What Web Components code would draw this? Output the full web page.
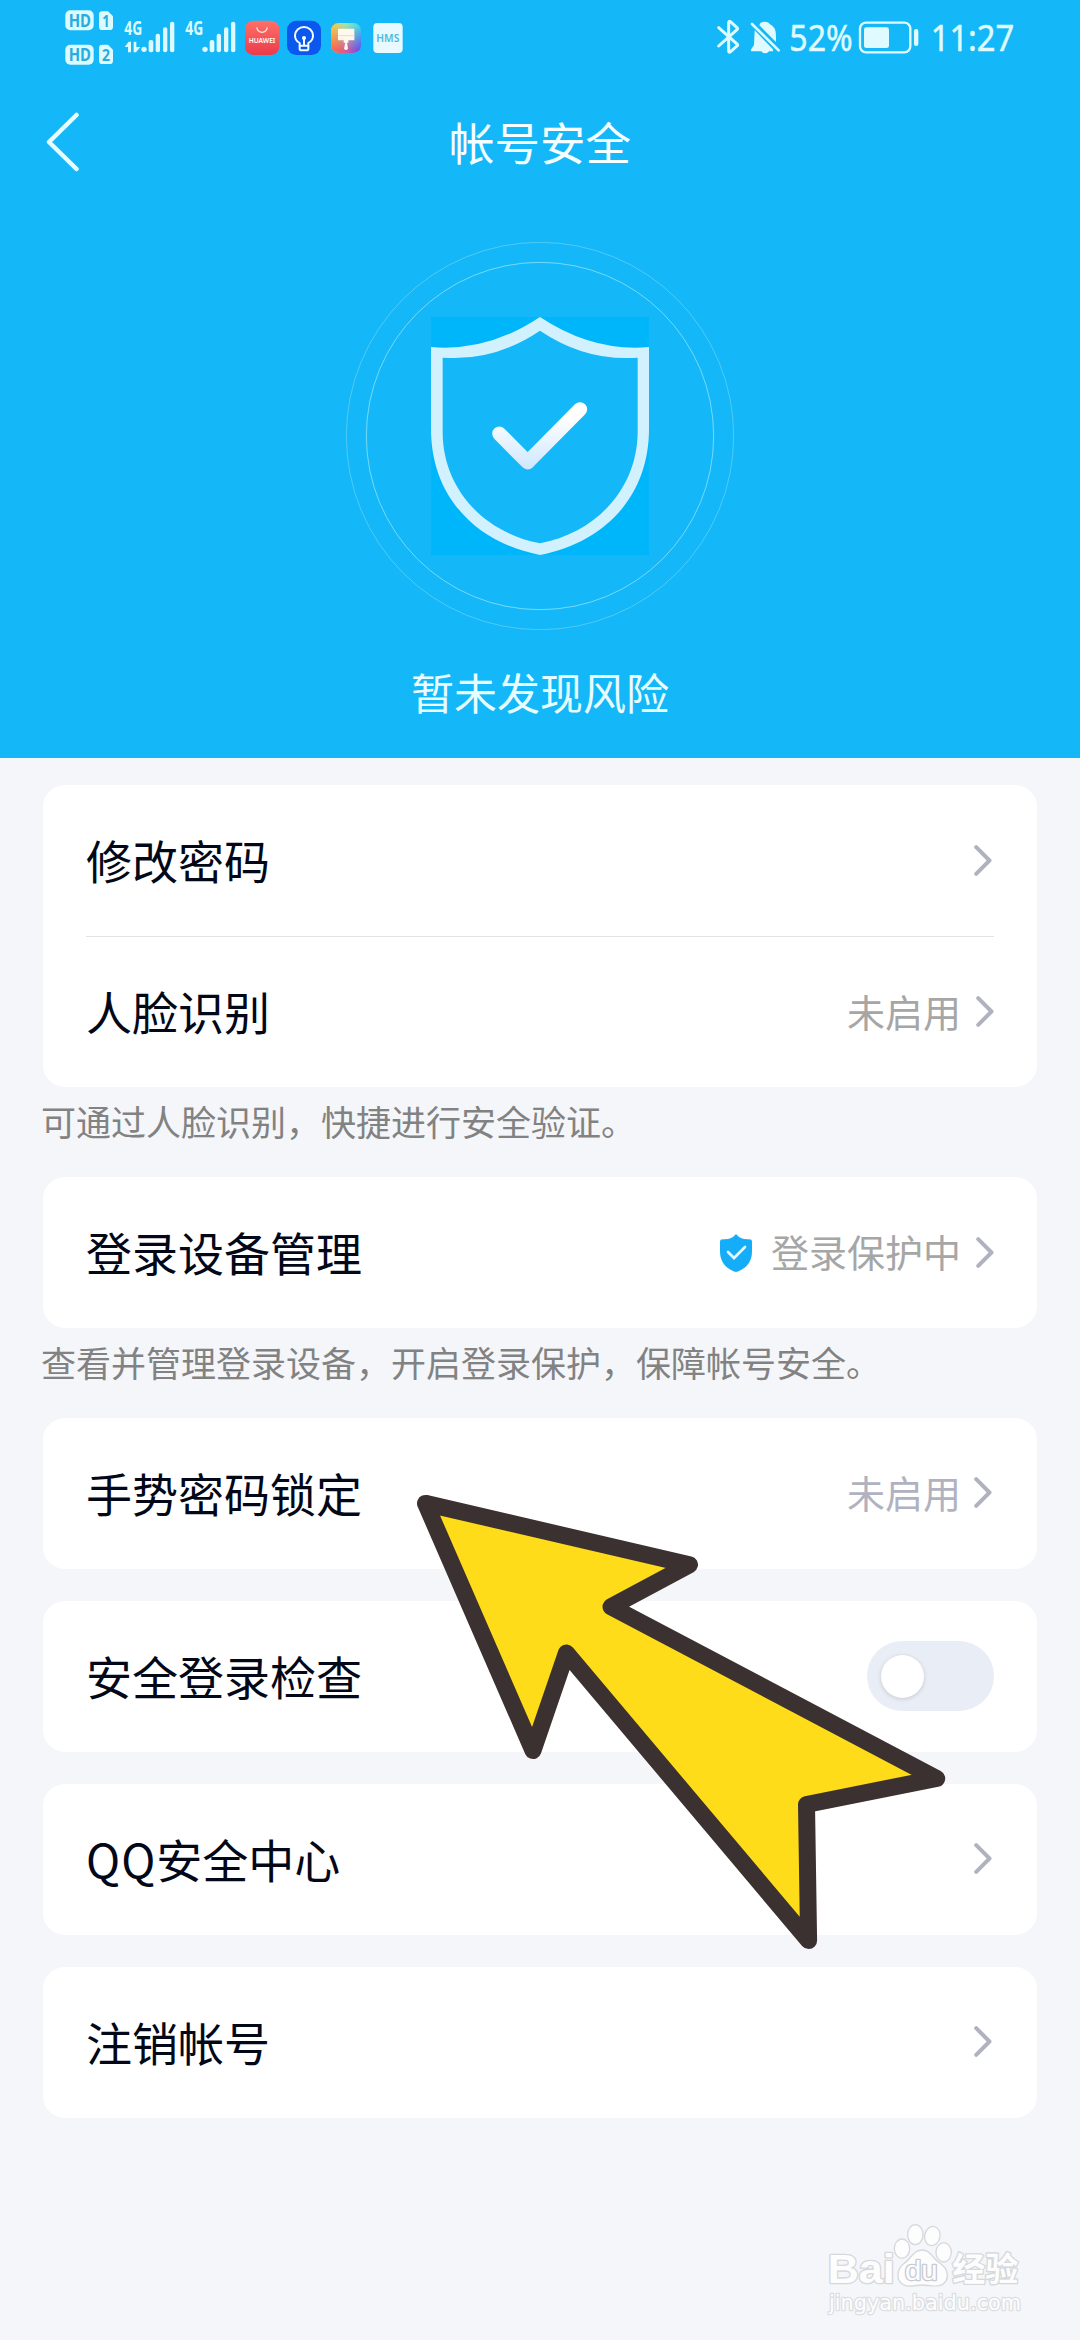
<!DOCTYPE html>
<html lang="zh-CN">
<head>
<meta charset="utf-8">
<title>帐号安全</title>
<style>
html,body{margin:0;padding:0}
body{width:1080px;height:2340px;overflow:hidden;background:#f4f6fa;font-family:"Noto Sans CJK SC","Noto Sans",sans-serif}
</style>
</head>
<body>
<security-page></security-page>
<script>
const define = (name, html) => {
  const t = document.createElement('template');
  t.innerHTML = html;
  customElements.define(name, class extends HTMLElement {
    constructor() {
      super();
      this.attachShadow({ mode: 'open' }).appendChild(t.content.cloneNode(true));
    }
  });
};

define('status-bar', `
<style>
:host{display:flex;justify-content:space-between;height:80px;box-sizing:border-box;padding:0 40px 0 40px;color:#e2fbff}
svg{display:block}
text{font-family:"Noto Sans",sans-serif}
</style>
<svg width="380" height="80" viewBox="0 0 1140 240" fill="#dcfaff">
  <rect x="76" y="31" width="85" height="60" rx="15"/>
  <path d="M187 34H204L219 49V80Q219 90 209 90H187Q177 90 177 80V44Q177 34 187 34Z"/>
  <rect x="76" y="134" width="85" height="60" rx="15"/>
  <path d="M187 134H204L219 149V182Q219 192 209 192H187Q177 192 177 182V144Q177 134 187 134Z"/>
  <g fill="#27acdf" font-weight="700" font-size="53">
    <text x="86" y="80" textLength="67" lengthAdjust="spacingAndGlyphs">HD</text>
    <text x="187" y="81" font-size="47" textLength="22" lengthAdjust="spacingAndGlyphs">1</text>
    <text x="86" y="183" textLength="67" lengthAdjust="spacingAndGlyphs">HD</text>
    <text x="186" y="183" font-size="47" textLength="24" lengthAdjust="spacingAndGlyphs">2</text>
  </g>
  <g font-weight="700" font-size="56">
    <text x="253" y="106" textLength="54" lengthAdjust="spacingAndGlyphs">4G</text>
    <text x="436" y="106" textLength="54" lengthAdjust="spacingAndGlyphs">4G</text>
  </g>
  <path d="M254 141L266 125H273V157H264V141ZM281 125H289V141H301L288 157H281Z"/>
  <g><circle cx="312" cy="148" r="8"/><rect x="326" y="120" width="14" height="37" rx="6"/><rect x="347" y="101" width="13" height="56" rx="6"/><rect x="369" y="82" width="13" height="75" rx="6"/><rect x="390" y="65" width="13" height="92" rx="6"/></g>
  <g transform="translate(183 0)"><circle cx="312" cy="148" r="8"/><rect x="326" y="120" width="14" height="37" rx="6"/><rect x="347" y="101" width="13" height="56" rx="6"/><rect x="369" y="82" width="13" height="75" rx="6"/><rect x="390" y="65" width="13" height="92" rx="6"/></g>
  <defs>
    <linearGradient id="red" x2="0" y2="1"><stop stop-color="#ff6f68"/><stop offset="1" stop-color="#ec3b4b"/></linearGradient>
    <linearGradient id="rb" x2="1" y2="0"><stop stop-color="#ffc63b"/><stop offset=".5" stop-color="#9fe0b0"/><stop offset="1" stop-color="#35d5f2"/></linearGradient>
    <linearGradient id="rb2" x2="1" y2="0"><stop stop-color="#ff6a3c"/><stop offset=".5" stop-color="#d95a9a"/><stop offset="1" stop-color="#5b50f5"/></linearGradient>
    <linearGradient id="mk" x2="0" y2="1"><stop offset=".1" stop-color="#000"/><stop offset=".9" stop-color="#fff"/></linearGradient>
    <mask id="m" maskContentUnits="objectBoundingBox"><rect width="1" height="1" fill="url(#mk)"/></mask>
  </defs>
  <rect x="615" y="62" width="103" height="103" rx="25" fill="url(#red)"/>
  <path d="M650 82Q653 96 666 97Q679 96 682 82" fill="none" stroke="#ffe3dd" stroke-width="4"/>
  <text x="626" y="129" font-size="23" font-weight="600" fill="#fff" textLength="80" lengthAdjust="spacingAndGlyphs">HUAWEI</text>
  <rect x="741" y="62" width="102" height="103" rx="28" fill="#0b58ef"/>
  <g fill="none" stroke="#f2fcff" stroke-width="6" stroke-linejoin="round"><path d="M779 137V129Q765 121 765 107A27 26 0 0 1 819 107Q819 121 805 129V137Z"/><path d="M779 137V146Q779 151 785 151H799Q805 151 805 146V137M792 117V136"/></g><circle cx="792" cy="114" r="6" fill="#fff"/>
  <rect x="873" y="69" width="90" height="90" rx="22" fill="url(#rb)"/>
  <rect x="873" y="69" width="90" height="90" rx="22" fill="url(#rb2)" mask="url(#m)"/>
  <path d="M894 86H943V121H925V128H921L924 146Q918 154 912 146L916 128H911V121H894Z" fill="#fff8ec"/><path d="M894 107H943" stroke="#f4d8c6" stroke-width="3"/>
  <rect x="1000" y="69" width="88" height="90" rx="12" fill="#e8f9ff"/>
  <text x="1009" y="125" font-size="31" font-weight="600" fill="#4eb9dd" textLength="69" lengthAdjust="spacingAndGlyphs">HMS</text>
</svg>
<svg width="340" height="80" viewBox="0 0 1020 240" fill="#dffbff">
  <path d="M56 83L112 133Q114 136 111 138L92 155Q86 160 86 152V68Q86 61 92 66L111 83Q114 86 111 89L56 138" fill="none" stroke="#dffbff" stroke-width="9" stroke-linecap="round"/>
  <path d="M181 69Q186 65 196 65Q206 66 210 73Q228 81 228 108V126L178 76ZM164 91L219 148V154H155Q151 152 154 147L162 135Z"/>
  <path d="M183 151H208Q205 160 196 160Q186 160 183 151Z"/>
  <path d="M156 72L236 151" stroke="#dffbff" stroke-width="8" stroke-linecap="round"/>
  <g font-size="108" stroke="#dffbff" stroke-width="1.500"><text x="268" y="154" textLength="190" lengthAdjust="spacingAndGlyphs">52%</text>
  <text x="692" y="154" textLength="251" lengthAdjust="spacingAndGlyphs">11:27</text></g>
  <rect x="480" y="68" width="151" height="89" rx="18" fill="none" stroke="#dffbff" stroke-width="7"/>
  <rect x="492" y="82" width="75" height="62" rx="7"/><rect x="642" y="87" width="13" height="51" rx="6"/>
</svg>`);

define('nav-bar', `
<style>
:host{display:grid;grid-template-columns:46px 1fr 46px;height:126px;align-items:center;color:#f4ffff;font-size:45.500px;line-height:66px}
svg{grid-column:2;grid-row:1;justify-self:start;margin-bottom:3px}
div{grid-column:2;grid-row:1;text-align:center;padding-bottom:4px}
</style>
<svg width="34" height="60" viewBox="0 0 34 60"><path d="M30.500 3L3 30L30.500 57" fill="none" stroke="#e6fcff" stroke-width="4.500" stroke-linecap="round" stroke-linejoin="round"/></svg>
<div><slot></slot></div>`);

define('safety-badge', `
<style>:host{display:block;height:388px;margin-top:36px}svg{display:block;margin:0 auto}</style>
<svg width="390" height="388" viewBox="45 36 1170 1164">
  <defs><linearGradient id="g" gradientUnits="userSpaceOnUse" x1="0" y1="560" x2="0" y2="719"><stop stop-color="#fff"/><stop offset="1" stop-color="#cde7fd"/></linearGradient></defs>
  <circle cx="630" cy="618" r="581" fill="none" stroke="#4fcbf8" stroke-width="3"/>
  <circle cx="630" cy="618" r="521" fill="none" stroke="#74dbf9" stroke-width="3"/>
  <rect x="303" y="261" width="654" height="714" fill="#00b6fb"/>
  <path d="M630 261Q788 366 957 351V596C957 800 822 938 630 975C438 938 303 800 303 596V351Q472 366 630 261Z" fill="#d2f1fe"/>
  <path d="M630 302Q768 395 923 383V610C920 780 796 908 630 940C464 908 340 780 338 610V383Q492 395 630 302Z" fill="#14b7f7"/>
  <path d="M508 611L593 697L750 538" fill="none" stroke="url(#g)" stroke-width="43" stroke-linecap="round" stroke-linejoin="round"/>
</svg>`);

define('safety-header', `
<style>
:host{display:block;height:758px;background:#14b7f7}
.s{font-size:43px;line-height:62px;text-align:center;color:#e8fdff;margin-top:30px}
</style>
<status-bar></status-bar><nav-bar>帐号安全</nav-bar><safety-badge></safety-badge>
<div class="s"><slot></slot></div>`);

define('list-card', `
<style>:host{display:block;background:#fff;border-radius:22px;margin:0 43px}</style><slot></slot>`);

define('list-row', `
<style>
:host{display:flex;align-items:center;height:151px;padding:0 43px;box-sizing:border-box;color:#030818;font-size:46px;line-height:66px}
:host([divided]){height:152px;position:relative}
:host([divided])::after{content:"";position:absolute;left:43px;right:43px;bottom:0;height:1px;background:#e3e3e3}
:host([short]){height:150px}
.l{flex:1;white-space:nowrap;margin-bottom:4px}
.v{display:flex;align-items:center;font-size:38px;line-height:54px;color:#a6a6a6}
:host([cool]) .v{color:#b0b3bf}
::slotted(span){margin-bottom:3px}
</style>
<span class="l"><slot></slot></span><span class="v"><slot name="value"></slot></span><slot name="end"></slot>`);

define('chevron-icon', `
<style>:host{display:block;width:18px;height:31px;margin:0 2px 2px 13px}:host([wide]){margin:0 0 1px 15px}svg{display:block}</style>
<svg width="18" height="31" viewBox="0 0 18 31"><path d="M2.200 2.200L15.500 15.500L2.200 28.800" fill="none" stroke="#b0b3bf" stroke-width="4" stroke-linecap="round" stroke-linejoin="round"/></svg>`);

define('shield-icon', `
<style>:host{display:block;margin-right:18px}svg{display:block}</style>
<svg width="34" height="38" viewBox="0 0 34 38"><path d="M17 0Q20 4 25 5L32 5.500Q33 6 33 8V18C33 29 25 36 17 38C9 36 1 29 1 18V8Q1 6 2 5.500L9 5Q14 4 17 0Z" fill="#16adf8"/><path d="M9 18L15 24L26 13" fill="none" stroke="#e4f8ff" stroke-width="2.700" stroke-linecap="round"/></svg>`);

define('toggle-switch', `
<style>:host{display:flex;align-items:center;box-sizing:border-box;width:127px;height:70px;border-radius:35px;background:#e9edf5;padding-left:14px;margin-bottom:1px}
i{width:43px;height:43px;border-radius:50%;background:#fff;box-shadow:0 1px 4px rgba(0,0,0,.16)}</style><i></i>`);

define('hint-text', `
<style>:host{display:flex;align-items:center;height:90px;padding:0 41px 22px;box-sizing:border-box;font-size:35px;line-height:50px;color:#828282;white-space:nowrap}</style><slot></slot>`);

define('pointer-arrow', `
<style>:host{position:absolute;left:410px;top:1488px}svg{display:block}</style>
<svg width="544" height="470" viewBox="410 1488 544 470"><path d="M425.500 1503.400L689.500 1564.700L611 1606.700L936.700 1778.500L806.500 1804.500L808.600 1940.500L566.400 1653L533 1750.500Z" fill="#ffdc19" stroke="#3b3131" stroke-width="17" stroke-linejoin="round"/></svg>`);

define('site-watermark', `
<style>:host{position:absolute;left:820px;top:2215px}svg{display:block}text{font-weight:700}</style>
<svg width="210" height="110" viewBox="60 45 630 330" fill="#fdfdfe" stroke="#d6d8dc" stroke-width="8" paint-order="stroke" stroke-linejoin="round">
  <text x="83" y="250" font-family="Liberation Sans" font-size="124" textLength="201" lengthAdjust="spacingAndGlyphs">Bai</text>
  <ellipse cx="306" cy="146" rx="21" ry="27"/><ellipse cx="346" cy="104" rx="21" ry="28"/><ellipse cx="397" cy="108" rx="21" ry="27" transform="rotate(12 397 108)"/><ellipse cx="431" cy="157" rx="21" ry="27"/>
  <path d="M366 152C392 152 398 180 421 193C442 207 447 235 429 250C411 262 387 253 366 253C345 253 323 263 306 249C289 234 294 207 313 192C335 178 341 152 366 152Z"/>
  <text x="315" y="240" font-family="Liberation Sans" style="font-weight:400" font-size="82" stroke="#c9cbd0" textLength="98" lengthAdjust="spacingAndGlyphs">du</text>
  <text x="457" y="243" font-family="Noto Sans CJK SC" font-size="98" textLength="198" lengthAdjust="spacingAndGlyphs">经验</text>
  <text x="87" y="331" font-family="DejaVu Sans" style="font-weight:400" stroke="#dcdee2" font-size="64" textLength="576" lengthAdjust="spacingAndGlyphs">jingyan.baidu.com</text>
</svg>`);

define('security-page', `
<style>
:host{display:block;position:relative;width:1080px;height:2340px}
main{display:flex;flex-direction:column;padding-top:27px}
.gap{margin-top:32px}
.latin{letter-spacing:1px}
</style>
<safety-header>暂未发现风险</safety-header>
<main>
  <list-card>
    <list-row divided>修改密码<chevron-icon slot="end"></chevron-icon></list-row>
    <list-row short>人脸识别<span slot="value">未启用</span><chevron-icon wide slot="end"></chevron-icon></list-row>
  </list-card>
  <hint-text>可通过人脸识别，快捷进行安全验证。</hint-text>
  <list-card><list-row>登录设备管理<shield-icon slot="value"></shield-icon><span slot="value">登录保护中</span><chevron-icon wide slot="end"></chevron-icon></list-row></list-card>
  <hint-text>查看并管理登录设备，开启登录保护，保障帐号安全。</hint-text>
  <list-card><list-row cool>手势密码锁定<span slot="value">未启用</span><chevron-icon slot="end"></chevron-icon></list-row></list-card>
  <list-card class="gap"><list-row>安全登录检查<toggle-switch slot="end"></toggle-switch></list-row></list-card>
  <list-card class="gap"><list-row><b class="latin" style="font-weight:400">QQ</b>安全中心<chevron-icon slot="end"></chevron-icon></list-row></list-card>
  <list-card class="gap"><list-row>注销帐号<chevron-icon slot="end"></chevron-icon></list-row></list-card>
</main>
<pointer-arrow></pointer-arrow>
<site-watermark></site-watermark>`);
</script>
</body>
</html>
